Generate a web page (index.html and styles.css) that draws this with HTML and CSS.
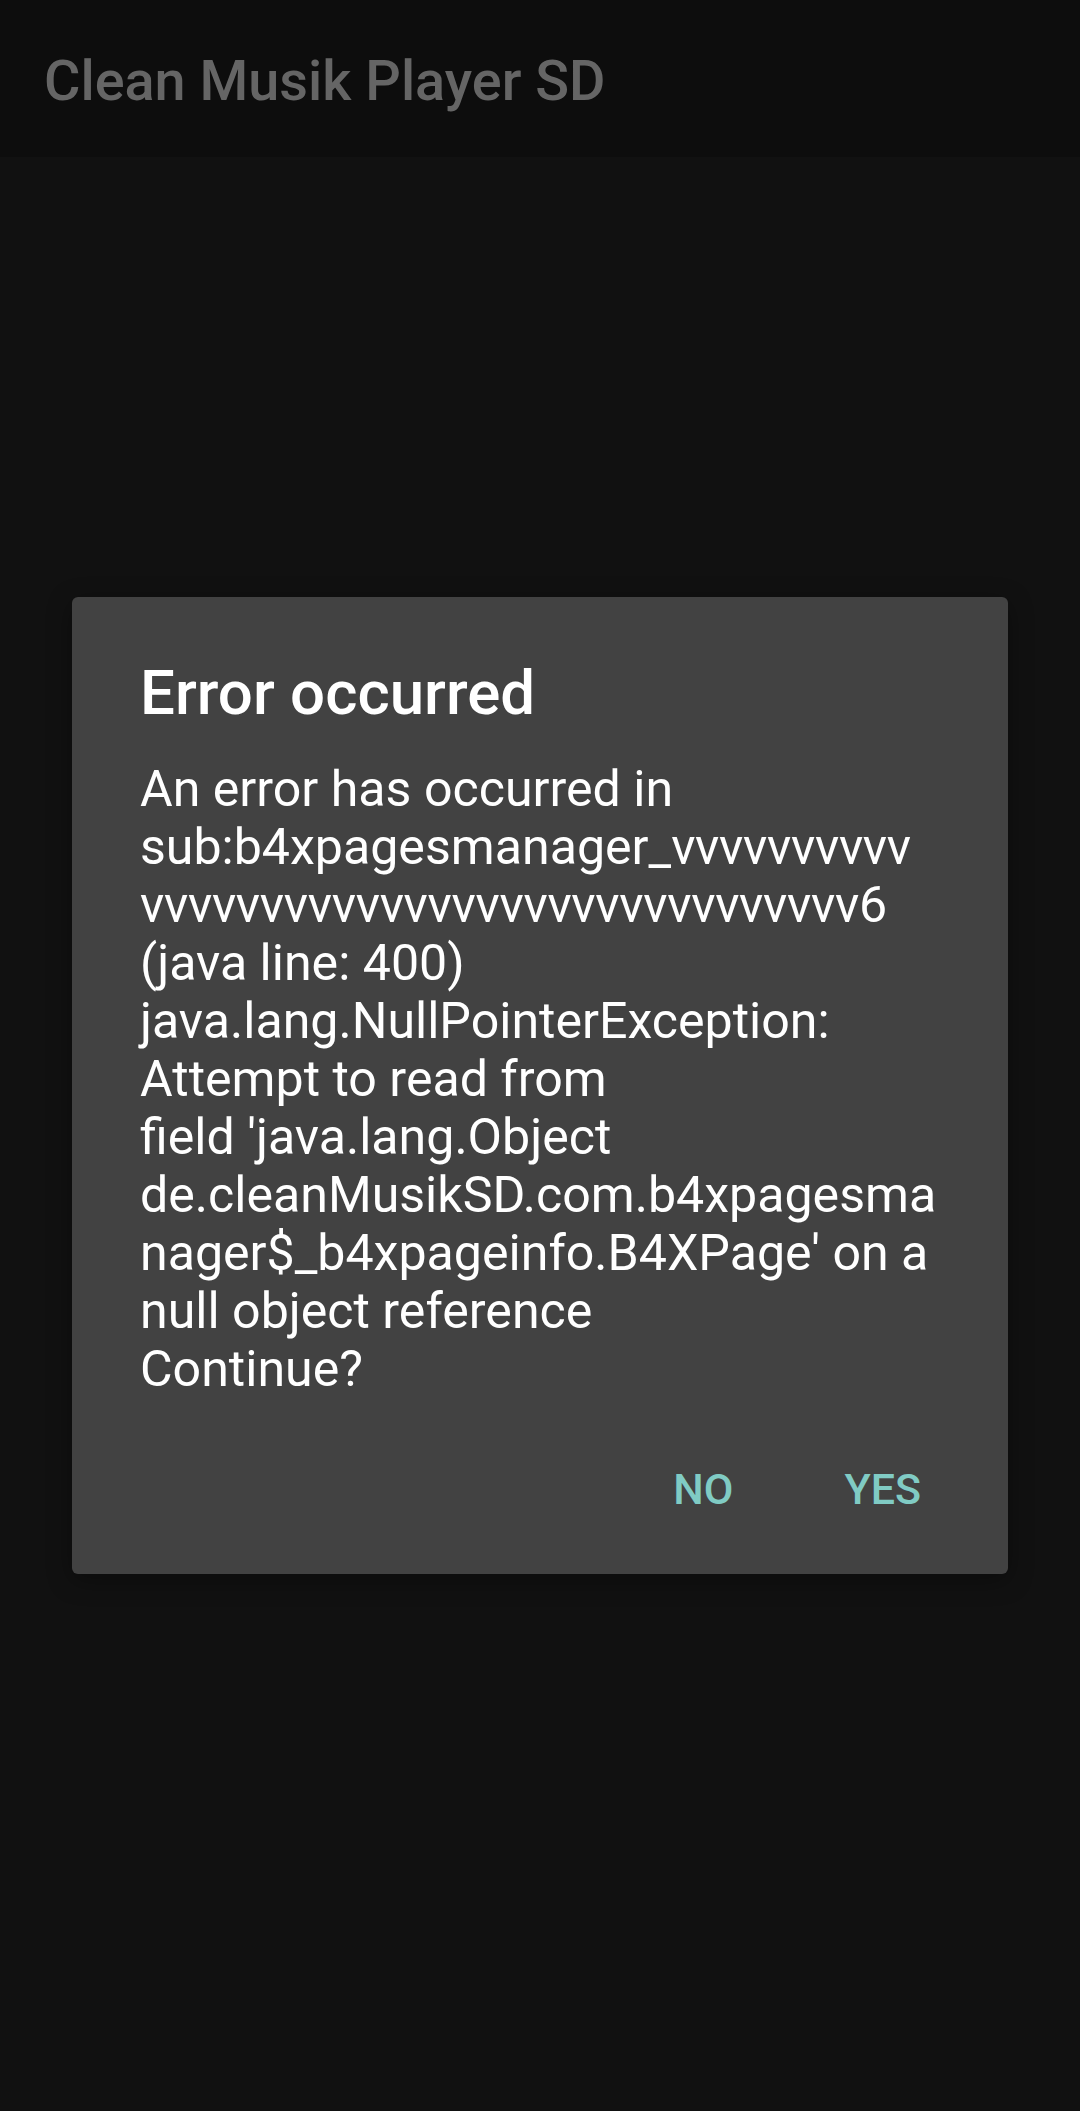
FILE: index.html
```html
<!DOCTYPE html>
<html>
<head>
<meta charset="utf-8">
<link rel="stylesheet" href="styles.css">
</head>
<body>
<div class="screen">
  <header class="appbar">
    <h1 class="appbar-title">Clean Musik Player SD</h1>
  </header>
  <main class="content">
    <div class="dialog">
      <h2 class="dialog-title">Error occurred</h2>
      <p class="dialog-message">An error has occurred in<br>sub:b4xpagesmanager_<span class="vrun">vvvvvvvvvv</span><br><span class="vrun">vvvvvvvvvvvvvvvvvvvvvvvvvvvvvv</span>6<br>(java line: 400)<br>java.lang.NullPointerException:<br>Attempt to read from<br>field 'java.lang.Object<br>de.cleanMusikSD.com.b4xpagesma<br>nager$_b4xpageinfo.B4XPage' on a<br>null object reference<br>Continue?</p>
      <div class="dialog-actions">
        <span class="dialog-btn">NO</span>
        <span class="dialog-btn">YES</span>
      </div>
    </div>
  </main>
</div>
</body>
</html>
```

FILE: styles.css
```css
html, body {
  margin: 0;
  padding: 0;
  background: #111111;
}
body {
  width: 1080px;
  height: 2111px;
  overflow: hidden;
  font-family: Roboto, "Noto Sans", sans-serif;
}
.screen {
  display: flex;
  flex-direction: column;
  height: 2111px;
}
.appbar {
  height: 157px;
  background: #0d0d0d;
  display: flex;
  align-items: flex-start;
  padding-left: 44px;
  box-sizing: border-box;
}
.appbar-title {
  margin: 0;
  margin-top: 49px;
  font-size: 55.8px;
  line-height: 64px;
  font-weight: 500;
  color: #656565;
}
.content {
  flex: 1;
  padding-top: 440px;
  padding-left: 72px;
}
.dialog {
  width: 936px;
  height: 977px;
  box-sizing: border-box;
  background: #424242;
  border-radius: 6px;
  box-shadow: 0 6px 24px rgba(0, 0, 0, 0.35);
  padding: 61px 66px 0 68px;
  display: flex;
  flex-direction: column;
}
.dialog-title {
  margin: 0;
  font-size: 61.8px;
  line-height: 71px;
  font-weight: 500;
  color: #ffffff;
}
.dialog-message {
  margin: 31px 0 0 0;
  font-size: 50.1px;
  line-height: 58px;
  font-weight: 400;
  color: #ffffff;
  white-space: nowrap;
}
.vrun {
  letter-spacing: -0.3px;
}
.dialog-actions {
  margin-top: 67px;
  margin-right: 21px;
  display: flex;
  justify-content: flex-end;
  gap: 111px;
}
.dialog-btn {
  font-size: 43px;
  line-height: 48px;
  font-weight: 500;
  color: #80cbc4;
}
```
